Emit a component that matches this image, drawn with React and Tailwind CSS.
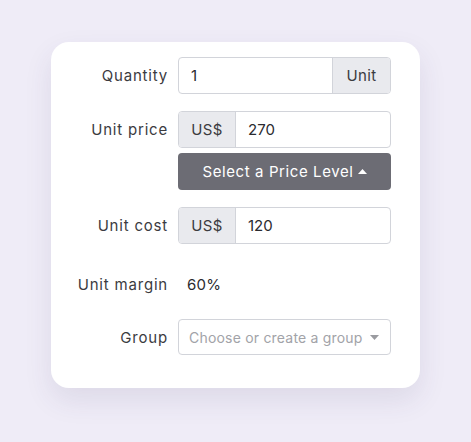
import React from 'react';

const font = { fontFamily: 'Inter, "Noto Sans", sans-serif' };

const Label = ({ children }) => (
    <div className="w-[101px] shrink-0 text-right text-[15px] text-[#3b3b3f] pr-[10px] box-content tracking-[0.8px] pt-[2px]">{children}</div>
);

const Caret = ({ up, className }) => (
    <svg width="9" height="5" viewBox="0 0 9 5" className={className}>
        {up ? <path d="M0 5 L4.5 0 L9 5 Z" fill="currentColor" /> : <path d="M0 0 L4.5 5 L9 0 Z" fill="currentColor" />}
    </svg>
);

const Addon = ({ children, side }) => (
    <div className={`h-full flex items-center justify-center bg-[#e9eaee] text-[15px] text-[#3b3b3f] px-[10px] tracking-[0.4px] pt-[1px] ${side === 'left' ? 'border-r border-[#d2d4da] w-[57px]' : 'border-l border-[#d2d4da] w-[58px]'}`}>
        {children}
    </div>
);

export default function App() {
    return (
        <div className="min-h-screen bg-[#efecf7] flex justify-center pt-[42px]" style={font}>
            <div className="w-[369px] h-[346px] bg-white rounded-[18px] shadow-[0_12px_28px_rgba(60,50,100,0.10)] pl-[16px] pt-[15px]">

                {/* Quantity */}
                <div className="flex items-center mb-[17px]">
                    <Label>Quantity</Label>
                    <div className="w-[213px] h-[37px] flex items-center border border-[#d2d4da] rounded-[4px] overflow-hidden">
                        <div className="flex-1 px-[12px] pt-[1px] text-[15px] text-[#2b2b2f]">1</div>
                        <Addon side="right">Unit</Addon>
                    </div>
                </div>

                {/* Unit price */}
                <div className="flex items-start mb-[17px]">
                    <div className="h-[37px] flex items-center"><Label>Unit price</Label></div>
                    <div className="w-[213px] flex flex-col gap-[5px]">
                        <div className="h-[37px] flex items-center border border-[#d2d4da] rounded-[4px] overflow-hidden">
                            <Addon side="left">US$</Addon>
                            <div className="flex-1 px-[12px] pt-[1px] text-[15px] text-[#2b2b2f]">270</div>
                        </div>
                        <button className="h-[37px] rounded-[4px] bg-[#6c6c74] text-white text-[15px] tracking-[0.6px] flex items-center justify-center gap-[4px] pt-[1px]">
                            Select a Price Level
                            <Caret up className="text-white mb-[2px]" />
                        </button>
                    </div>
                </div>

                {/* Unit cost */}
                <div className="flex items-center mb-[17px]">
                    <Label>Unit cost</Label>
                    <div className="w-[213px] h-[37px] flex items-center border border-[#d2d4da] rounded-[4px] overflow-hidden">
                        <Addon side="left">US$</Addon>
                        <div className="flex-1 px-[12px] pt-[1px] text-[15px] text-[#2b2b2f]">120</div>
                    </div>
                </div>

                {/* Unit margin */}
                <div className="flex items-center h-[46px] mb-[12px]">
                    <Label>Unit margin</Label>
                    <div className="pl-[9px] pt-[2px] text-[15px] text-[#2b2b2f] tracking-[0.3px]">60%</div>
                </div>

                {/* Group */}
                <div className="flex items-center">
                    <Label>Group</Label>
                    <div className="w-[213px] h-[36px] flex items-center justify-between border border-[#d2d4da] rounded-[4px] pl-[10px] pr-[11px]">
                        <span className="text-[14px] text-[#a2a3a8] tracking-[0.2px]">Choose or create a group</span>
                        <Caret className="text-[#9a9ba0]" />
                    </div>
                </div>
            </div>
        </div>
    );
}
